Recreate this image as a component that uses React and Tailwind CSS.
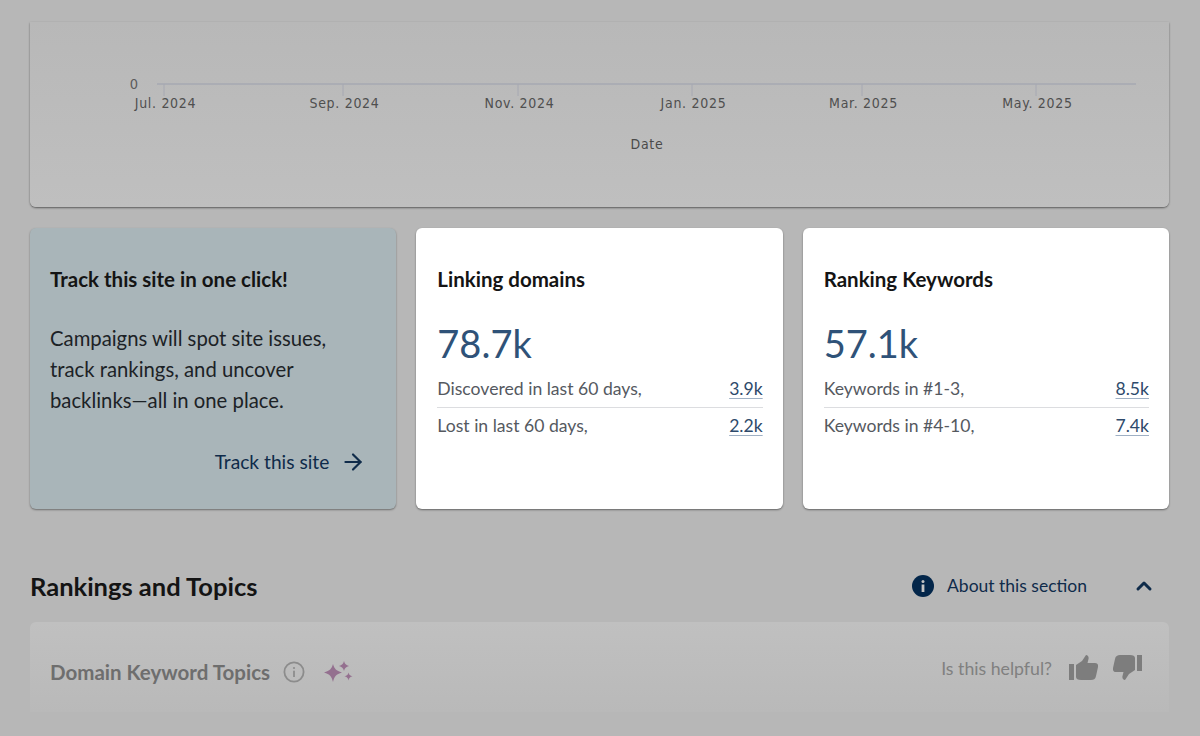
import React from 'react';
import { ArrowRight, ChevronUp } from 'lucide-react';

const ticks = [
  { x: 164, label: 'Jul. 2024' },
  { x: 343, label: 'Sep. 2024' },
  { x: 518, label: 'Nov. 2024' },
  { x: 692, label: 'Jan. 2025' },
  { x: 862, label: 'Mar. 2025' },
  { x: 1036, label: 'May. 2025' },
];

const axisFont = "'DejaVu Sans Condensed', 'Noto Sans', sans-serif";

function DateChart() {
  return (
    <svg width="1139" height="185" viewBox="30 22 1139 185" className="block">
      <line x1="157" y1="84" x2="1136" y2="84" stroke="#a6a8b2" strokeWidth="1.5" />
      {ticks.map((t) => (
        <g key={t.label}>
          <line x1={t.x} y1="84" x2={t.x} y2="96" stroke="#a6a8b2" strokeWidth="1" />
          <text x={t.x + 1.5} y="108" textAnchor="middle" fontSize="14" letterSpacing="0.7" fill="#4f4f4f" fontFamily={axisFont}>
            {t.label}
          </text>
        </g>
      ))}
      <text x="134" y="89" textAnchor="middle" fontSize="14.5" fill="#5c5c5c" fontFamily={axisFont}>0</text>
      <text x="647" y="149" textAnchor="middle" fontSize="14" letterSpacing="0.7" fill="#4a4a4a" fontFamily={axisFont}>Date</text>
    </svg>
  );
}

function StatRow({ label, value, divider }) {
  return (
    <div className={`flex justify-between items-center h-[37px] ${divider ? 'border-b border-[#dcdde0]' : ''}`}>
      <span className="text-[#55595f]">{label}</span>
      <span className="text-[#2e4a6b] underline decoration-[#9fb0c4] underline-offset-[3px]">{value}</span>
    </div>
  );
}

function StatCard({ title, total, rows }) {
  return (
    <div className="bg-white rounded-md shadow-[0_1px_2px_rgba(0,0,0,0.45)] h-[281px] pt-[37px] pl-[21px] pr-5">
      <h3 className="text-[20.5px] leading-7 font-bold text-[#141414]">{title}</h3>
      <div className="text-[38px] leading-[48px] text-[#2f5278] mt-[26px]">{total}</div>
      <div className="text-[17.6px] mt-[4px]">
        <StatRow label={rows[0][0]} value={rows[0][1]} divider />
        <StatRow label={rows[1][0]} value={rows[1][1]} />
      </div>
    </div>
  );
}

export default function App() {
  return (
    <div className="h-[736px] overflow-hidden bg-[#b7b7b7] pl-[30px] pr-[31px] pt-[22px] font-['Lato',sans-serif]">
      <div className="h-[185px] rounded-b-md bg-gradient-to-b from-[#b8b8b8] to-[#bfbfbf] shadow-[0_1px_2px_rgba(0,0,0,0.5)]">
        <DateChart />
      </div>

      <div className="grid grid-cols-3 gap-5 mt-[21px]">
        <div className="bg-[#a9b5b9] rounded-md shadow-[0_1px_2px_rgba(0,0,0,0.4)] h-[281px] pt-[37px] px-5 text-[#1c2226]">
          <h3 className="text-[20.5px] leading-7 font-bold text-[#141414]">Track this site in one click!</h3>
          <p className="text-[20.3px] leading-[31px] mt-[30px]">
            Campaigns will spot site issues,<br />
            track rankings, and uncover<br />
            backlinks—all in one place.
          </p>
          <div className="flex justify-end items-center gap-[11px] mt-[32px] pr-[10px] text-[#0f2b4a] text-[19.2px]">
            <span>Track this site</span>
            <ArrowRight size={26} strokeWidth={2} />
          </div>
        </div>
        <StatCard
          title="Linking domains"
          total="78.7k"
          rows={[['Discovered in last 60 days,', '3.9k'], ['Lost in last 60 days,', '2.2k']]}
        />
        <StatCard
          title="Ranking Keywords"
          total="57.1k"
          rows={[['Keywords in #1-3,', '8.5k'], ['Keywords in #4-10,', '7.4k']]}
        />
      </div>

      <div className="flex items-center justify-between mt-[59px] h-9">
        <h2 className="text-[25.5px] font-bold text-[#141414]">Rankings and Topics</h2>
        <div className="flex items-center text-[#0f2b4a]">
          <svg width="22" height="22" viewBox="0 0 22 22" className="mr-[13px]">
            <circle cx="11" cy="11" r="11" fill="#03264a" />
            <circle cx="11" cy="6.5" r="1.5" fill="#c4c4c4" />
            <rect x="9.6" y="9.5" width="2.8" height="7.5" fill="#c4c4c4" />
          </svg>
          <span className="text-[17.5px]">About this section</span>
          <ChevronUp size={24} strokeWidth={3} className="ml-[45px] mr-[13px]" />
        </div>
      </div>

      <div className="flex items-start justify-between mt-[18px] h-[90px] rounded-t-md bg-gradient-to-b from-[#c0c0c0] to-[#b9b9b9] pl-5 pr-[27px] pt-[36px]">
        <div className="flex items-center">
          <h3 className="text-[20.5px] leading-7 font-bold text-[#6e6e6e]">Domain Keyword Topics</h3>
          <svg width="22" height="22" viewBox="0 0 22 22" className="ml-[13px]">
            <circle cx="11" cy="11" r="9.6" fill="none" stroke="#8c8c8c" strokeWidth="1.8" />
            <circle cx="11" cy="7" r="1.1" fill="#8c8c8c" />
            <rect x="10.1" y="9.7" width="1.8" height="6.3" fill="#8c8c8c" />
          </svg>
          <svg width="30" height="22" viewBox="0 0 30 22" className="ml-[18px]" fill="#94708f">
            <path d="M10 3 C11.5 8 13 9.5 19 11.5 C13 13.5 11.5 15 10 21 C8.5 15 7 13.5 1 11.5 C7 9.5 8.5 8 10 3 Z" />
            <path d="M21 0 C21.8 3 23 4.2 26 5 C23 5.8 21.8 7 21 10 C20.2 7 19 5.8 16 5 C19 4.2 20.2 3 21 0 Z" />
            <path d="M25.5 11.5 C26 13.6 27 14.6 29.5 15.3 C27 16 26 17 25.5 19.5 C25 17 24 16 21.5 15.3 C24 14.6 25 13.6 25.5 11.5 Z" />
          </svg>
        </div>
        <div className="flex items-start -mt-[3px]">
          <span className="text-[17.7px] leading-[26px] mt-px text-[#808080] mr-[17px]">Is this helpful?</span>
          <svg width="29" height="26" viewBox="0 0 29 26" fill="#7d7d7d">
            <rect x="0" y="9" width="5" height="16" />
            <path d="M7 10 L13 6 L17 0 C19 0 20 2 19.5 4 L18.5 8 L26 8 C28.5 8 29.5 10 29 12 L27 21 C26.5 24 24.5 25 22 25 L12 25 C9 25 7 24 7 22 Z" />
          </svg>
          <svg width="29" height="26" viewBox="0 0 29 26" fill="#7d7d7d" className="ml-[15px]">
            <rect x="24" y="0" width="5" height="16" />
            <path d="M22 15 L16 19 L12 25 C10 25 9 23 9.5 21 L10.5 17 L3 17 C0.5 17 -0.5 15 0 13 L2 4 C2.5 1 4.5 0 7 0 L17 0 C20 0 22 1 22 3 Z" />
          </svg>
        </div>
      </div>
    </div>
  );
}
